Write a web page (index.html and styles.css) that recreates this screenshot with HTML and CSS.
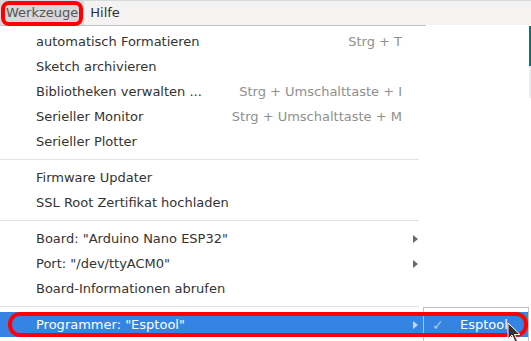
FILE: index.html
```html
<!DOCTYPE html>
<html>
<head>
<meta charset="utf-8">
<link rel="stylesheet" href="styles.css">
</head>
<body>
<div class="menubar">
  <span class="mb-item active">Werkzeuge</span>
  <span class="mb-item">Hilfe</span>
</div>
<div class="main">
  <div class="menu">
    <div class="item"><span class="label">automatisch Formatieren</span><span class="accel">Strg + T</span><span class="arrow-col"></span></div>
    <div class="item"><span class="label">Sketch archivieren</span><span class="accel"></span><span class="arrow-col"></span></div>
    <div class="item"><span class="label">Bibliotheken verwalten ...</span><span class="accel">Strg + Umschalttaste + I</span><span class="arrow-col"></span></div>
    <div class="item"><span class="label">Serieller Monitor</span><span class="accel">Strg + Umschalttaste + M</span><span class="arrow-col"></span></div>
    <div class="item"><span class="label">Serieller Plotter</span><span class="accel"></span><span class="arrow-col"></span></div>
    <div class="sep"></div>
    <div class="item"><span class="label">Firmware Updater</span><span class="accel"></span><span class="arrow-col"></span></div>
    <div class="item"><span class="label">SSL Root Zertifikat hochladen</span><span class="accel"></span><span class="arrow-col"></span></div>
    <div class="sep"></div>
    <div class="item"><span class="label">Board: "Arduino Nano ESP32"</span><span class="accel"></span><span class="arrow-col"><span class="arrow"></span></span></div>
    <div class="item"><span class="label">Port: "/dev/ttyACM0"</span><span class="accel"></span><span class="arrow-col"><span class="arrow"></span></span></div>
    <div class="item"><span class="label">Board-Informationen abrufen</span><span class="accel"></span><span class="arrow-col"></span></div>
    <div class="sep"></div>
    <div class="item selected"><span class="label">Programmer: "Esptool"</span><span class="accel"></span><span class="arrow-col"><span class="arrow"></span></span></div>
  </div>
  <div class="side">
    <div class="teal"></div>
    <div class="grey"></div>
  </div>
</div>
<div class="submenu">
  <div class="sub-item"><span class="check">✓</span><span>Esptool</span></div>
</div>
<div class="mark mark-top"></div>
<div class="mark mark-row"></div>
<svg class="cursor" width="14" height="22" viewBox="0 0 14 22">
  <path d="M1 1 L1 17 L5 13 L8 20 L10.5 19 L7.5 12.5 L13 12.5 Z" fill="#333" stroke="#fff" stroke-width="1"/>
</svg>
</body>
</html>
```

FILE: styles.css
```css
html, body {
  margin: 0;
  padding: 0;
}
body {
  width: 531px;
  height: 341px;
  overflow: hidden;
  position: relative;
  background: #ffffff;
  font-family: "DejaVu Sans", sans-serif;
  font-size: 13px;
  color: #333333;
}
.menubar {
  display: flex;
  height: 24px;
  border-top: 1px solid #d6dadf;
  background: #f4f3f2;
  line-height: 24px;
}
.mb-item {
  padding: 0 6px;
  color: #2e3436;
}
.mb-item.active {
  background: #d8d8d8;
  color: #555555;
}
.main {
  display: flex;
}
.menu {
  width: 426px;
  border-top: 1px solid #c4c4c4;
  padding-top: 3px;
  background: #ffffff;
}
.item {
  display: grid;
  grid-template-columns: 1fr auto 16px;
  height: 25px;
  line-height: 25px;
  padding: 0 8px 0 36px;
  color: #333333;
}
.accel {
  color: #8f8f8f;
}
.arrow-col {
  display: flex;
  justify-content: flex-end;
  align-items: center;
}
.arrow {
  width: 0;
  height: 0;
  border-top: 4px solid transparent;
  border-bottom: 4px solid transparent;
  border-left: 5px solid #6b6b6b;
}
.item.selected {
  background: #3584e4;
  color: #ffffff;
}
.item.selected .arrow {
  border-left-color: #c8d8ee;
}
.sep {
  height: 1px;
  background: #e2e2e2;
  margin: 5px 7px 5px 0;
}
.side {
  flex: 1;
  display: flex;
  flex-direction: column;
  align-items: flex-end;
  padding-top: 1px;
}
.teal {
  width: 2px;
  height: 40px;
  background: #00787a;
}
.grey {
  width: 2px;
  height: 32px;
  background: #e9eded;
}
.submenu {
  position: absolute;
  left: 423px;
  top: 307px;
  width: 106px;
  height: 40px;
  border: 1px solid #c2c2c2;
  background: #ffffff;
  padding-top: 4px;
  box-sizing: border-box;
}
.sub-item {
  display: flex;
  align-items: center;
  height: 25px;
  background: #3584e4;
  color: #ffffff;
  padding-left: 8px;
}
.check {
  color: #b4c6de;
  width: 28px;
  font-size: 14px;
}
.mark {
  position: absolute;
  border: 4px solid #ff0000;
  box-sizing: border-box;
}
.mark-top {
  left: 1px;
  top: 1px;
  width: 82px;
  height: 25px;
  border-radius: 8px;
}
.mark-row {
  left: 8px;
  top: 312px;
  width: 520px;
  height: 25px;
  border-radius: 12px;
}
.cursor {
  position: absolute;
  left: 507px;
  top: 322px;
}
```
